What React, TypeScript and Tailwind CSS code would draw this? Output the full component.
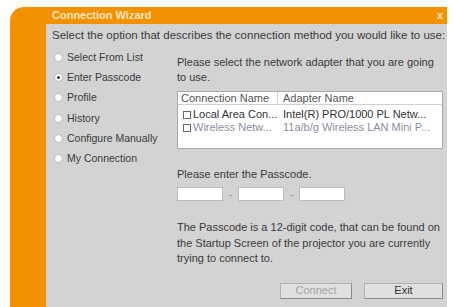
import React from 'react';

const options = [
    'Select From List',
    'Enter Passcode',
    'Profile',
    'History',
    'Configure Manually',
    'My Connection',
];

const adapters = [
    { conn: 'Local Area Con...', name: 'Intel(R) PRO/1000 PL Netw...', dim: false },
    { conn: 'Wireless Netw...', name: '11a/b/g Wireless LAN Mini P...', dim: true },
];

const Radio: React.FC<{ checked?: boolean }> = ({ checked }) => (
    <span className="w-[9px] h-[9px] rounded-full bg-white border border-[#b8b8b8] flex items-center justify-center shrink-0">
        {checked && <span className="w-[3px] h-[3px] rounded-full bg-[#333]"></span>}
    </span>
);

const App: React.FC = () => {
    return (
        <div className="w-[454px] h-[307px] bg-white overflow-hidden pl-[10px] pt-[7px] pr-[7px] text-[#3a3a3a] text-[11px] leading-none" style={{ fontFamily: '"Liberation Sans", Arial, sans-serif' }}>
            <div className="h-full bg-[#f39200] rounded-tl-[14px] flex flex-col">
                {/* title bar */}
                <div className="h-[17px] flex items-center pl-[42px] pr-[4px] shrink-0">
                    <span className="font-bold text-[#fde6c4] text-[11px]">Connection Wizard</span>
                    <span className="ml-auto font-bold text-[#fde6c4] text-[11px]">x</span>
                </div>

                <div className="flex-1 flex">
                    <div className="w-[36px] shrink-0"></div>
                    <div className="flex-1 bg-[#d3d3d3] pl-[6px] pt-[5px]">
                        <p className="h-[13px] leading-[13px] text-[11.5px] whitespace-nowrap">Select the option that describes the connection method you would like to use:</p>

                        <div className="flex mt-[5px]">
                            {/* options */}
                            <div className="w-[125px] shrink-0 pl-[2px] flex flex-col text-[10.5px]">
                                {options.map((o, i) => (
                                    <div key={o} className="h-[20.3px] flex items-center gap-[4px]">
                                        <Radio checked={i === 1} />
                                        <span>{o}</span>
                                    </div>
                                ))}
                            </div>

                            {/* right side */}
                            <div className="flex-1 pt-[8px] pr-[4px]">
                                <p className="leading-[15px]">Please select the network adapter that you are going to use.</p>

                                <div className="mt-[6px] h-[58px] bg-white border border-[#a9a9a9]">
                                    <div className="flex h-[13px] border-b border-[#d0d0d0] items-center text-[#555]">
                                        <div className="w-[100px] pl-[3px] border-r border-[#d0d0d0] h-full flex items-center">Connection Name</div>
                                        <div className="pl-[5px]">Adapter Name</div>
                                    </div>
                                    <div className="pt-[3px]">
                                        {adapters.map((a) => (
                                            <div key={a.conn} className={`flex h-[13px] items-center ${a.dim ? 'text-[#8a8fa0]' : 'text-[#333]'}`}>
                                                <div className="w-[100px] pl-[5px] flex items-center gap-[2px]">
                                                    <span className="w-[8px] h-[8px] border border-[#666] bg-white shrink-0"></span>
                                                    <span>{a.conn}</span>
                                                </div>
                                                <div className="pl-[5px] whitespace-nowrap">{a.name}</div>
                                            </div>
                                        ))}
                                    </div>
                                </div>

                                <p className="mt-[19px] leading-[13px]">Please enter the Passcode.</p>
                                <div className="flex items-center mt-[6px]">
                                    <span className="w-[46px] h-[14px] bg-white border border-[#bdbdbd]"></span>
                                    <span className="w-[15px] text-center text-[#999]">-</span>
                                    <span className="w-[46px] h-[14px] bg-white border border-[#bdbdbd]"></span>
                                    <span className="w-[15px] text-center text-[#999]">-</span>
                                    <span className="w-[46px] h-[14px] bg-white border border-[#bdbdbd]"></span>
                                </div>

                                <p className="mt-[19px] leading-[15.5px] pr-[2px]">
                                    The Passcode is a 12-digit code, that can be found on the Startup Screen of the projector you are currently trying to connect to.
                                </p>

                                <div className="flex justify-end gap-[12px] mt-[16px]">
                                    <button className="w-[72px] h-[16px] bg-[#e0e0e0] border border-[#b0b0b0] border-r-[#8c8c8c] border-b-[#8c8c8c] text-[#a5a5a5]">Connect</button>
                                    <button className="w-[79px] h-[16px] bg-[#e0e0e0] border border-[#b0b0b0] border-r-[#8c8c8c] border-b-[#8c8c8c] text-[#333]">Exit</button>
                                </div>
                            </div>
                        </div>
                    </div>
                </div>
            </div>
        </div>
    );
};

export default App;
